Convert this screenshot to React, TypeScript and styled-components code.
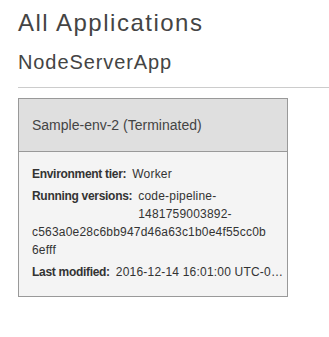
import React from 'react';
import styled, { createGlobalStyle } from 'styled-components';

const GlobalStyle = createGlobalStyle`
  html, body {
    margin: 0;
    padding: 0;
    background: #fff;
  }
  body {
    font-family: "Liberation Sans", Arial, sans-serif;
    color: #333;
  }
`;

const Page = styled.div`
  padding-left: 18px;
`;

const Title = styled.h1`
  margin: 9px 0 0;
  font-size: 24px;
  line-height: 28px;
  font-weight: normal;
  letter-spacing: 1.5px;
  color: #444;
`;

const AppName = styled.h2`
  margin: 13px 0 0;
  font-size: 20px;
  line-height: 24px;
  font-weight: normal;
  letter-spacing: 0.9px;
  color: #444;
`;

const Rule = styled.hr`
  margin: 13px 0 0;
  border: none;
  border-top: 1px solid #ccc;
  height: 0;
`;

const Card = styled.div`
  margin-top: 10px;
  width: 268px;
  border: 1px solid #999;
  background: #f4f4f4;
`;

const CardHeader = styled.div`
  padding: 16px 13px;
  line-height: 20px;
  font-size: 14px;
  color: #444;
  background: #dfdfdf;
  border-bottom: 1px solid #999;
`;

const CardBody = styled.div`
  padding: 13px 4px 15px 13px;
  font-size: 12px;
  line-height: 18px;
  letter-spacing: 0.2px;
  color: #333;
`;

const Item = styled.div<{ $wrap?: boolean }>`
  margin-top: 4px;
  padding-right: ${p => (p.$wrap ? '14px' : '0')};
  overflow-wrap: break-word;
  &:first-child {
    margin-top: 0;
  }
`;

const Label = styled.span<{ $lines?: number }>`
  font-weight: bold;
  letter-spacing: -0.3px;
  margin-right: 6px;
  ${p => (p.$lines ? `float: left; height: ${p.$lines * 18}px;` : '')}
`;

const Clipped = styled.div`
  white-space: nowrap;
  overflow: hidden;
  text-overflow: ellipsis;
`;

export default function App() {
  return (
    <Page>
      <GlobalStyle />
      <Title>All Applications</Title>
      <AppName>NodeServerApp</AppName>
      <Rule />
      <Card>
        <CardHeader>Sample-env-2 (Terminated)</CardHeader>
        <CardBody>
          <Item>
            <Label>Environment tier:</Label>Worker
          </Item>
          <Item $wrap>
            <Label $lines={2}>Running versions:</Label>
            code-pipeline-1481759003892-c563a0e28c6bb947d46a63c1b0e4f55cc0b6efff
          </Item>
          <Item>
            <Clipped>
              <Label>Last modified:</Label>2016-12-14 16:01:00 UTC-0800
            </Clipped>
          </Item>
        </CardBody>
      </Card>
    </Page>
  );
}
